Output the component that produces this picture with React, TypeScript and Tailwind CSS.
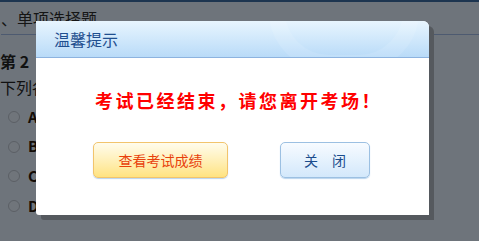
import React from "react";

const font = '"Noto Sans CJK SC", "Liberation Sans", sans-serif';

function Radio({ letter }: { letter: string }) {
  return (
    <div className="flex items-center h-[29.7px] pl-[8px] gap-[8px]">
      <span className="w-[12px] h-[12px] rounded-full bg-[#70757b] border border-[#5c6066]" />
      <span className="font-bold text-[15px] text-[#140c06]">{letter}</span>
    </div>
  );
}

export default function App() {
  return (
    <div className="relative w-[479px] h-[241px] overflow-hidden bg-[#6e747b]" style={{ fontFamily: font }}>
      <div className="h-[2px] bg-[#1d3550]" />
      <div className="h-[33px] flex items-center text-[16px] text-[#151515] border-b border-[#4d5a70] ml-[1px]">
        、单项选择题
      </div>
      <div className="pt-[15px] text-[16px] font-bold text-[#111] leading-[22px]">第 2</div>
      <div className="pt-[4px] text-[16px] text-[#111] leading-[22px]">下列各</div>
      <div className="pt-[4px]">
        <Radio letter="A" />
        <Radio letter="B" />
        <Radio letter="C" />
        <Radio letter="D" />
      </div>

      <div className="absolute left-[36px] top-[21px] w-[393px] h-[194px] rounded-tr-[6px] rounded-bl-[3px] bg-white shadow-[5px_5px_0_#55595e] flex flex-col overflow-hidden">
        <div className="relative h-[37px] shrink-0 border-b border-[#8db3df] bg-gradient-to-b from-[#e8f5fe] to-[#b9dbf8] flex items-center pl-[18px] overflow-hidden">
          <div className="absolute right-[10px] top-[-70px] w-[150px] h-[120px] rounded-full border-[16px] border-white/10" />
          <span className="relative text-[16px] text-[#1f4f8f]">温馨提示</span>
        </div>
        <div className="flex-1 flex flex-col items-center">
          <div className="mt-[29px] text-[18px] font-bold text-[#ff0000] tracking-[2.5px] leading-[26px] pl-[12px]">
            考试已经结束，请您离开考场！
          </div>
          <div className="mt-[29px] flex gap-[52px] pr-[2px]">
            <button className="w-[135px] h-[36px] rounded-[5px] border border-[#f2c46c] bg-gradient-to-b from-[#fffcec] to-[#ffe380] shadow-[0_1px_1px_#b9d4ee] text-[14px] text-[#e8400b]">
              查看考试成绩
            </button>
            <button className="w-[90px] h-[36px] rounded-[5px] border border-[#9cc0e2] bg-gradient-to-b from-[#f7fbff] to-[#d3e8fb] shadow-[0_1px_1px_#b9d4ee] text-[14px] text-[#1b4c8c] tracking-[14px] pl-[14px]">
              关闭
            </button>
          </div>
        </div>
      </div>
    </div>
  );
}
